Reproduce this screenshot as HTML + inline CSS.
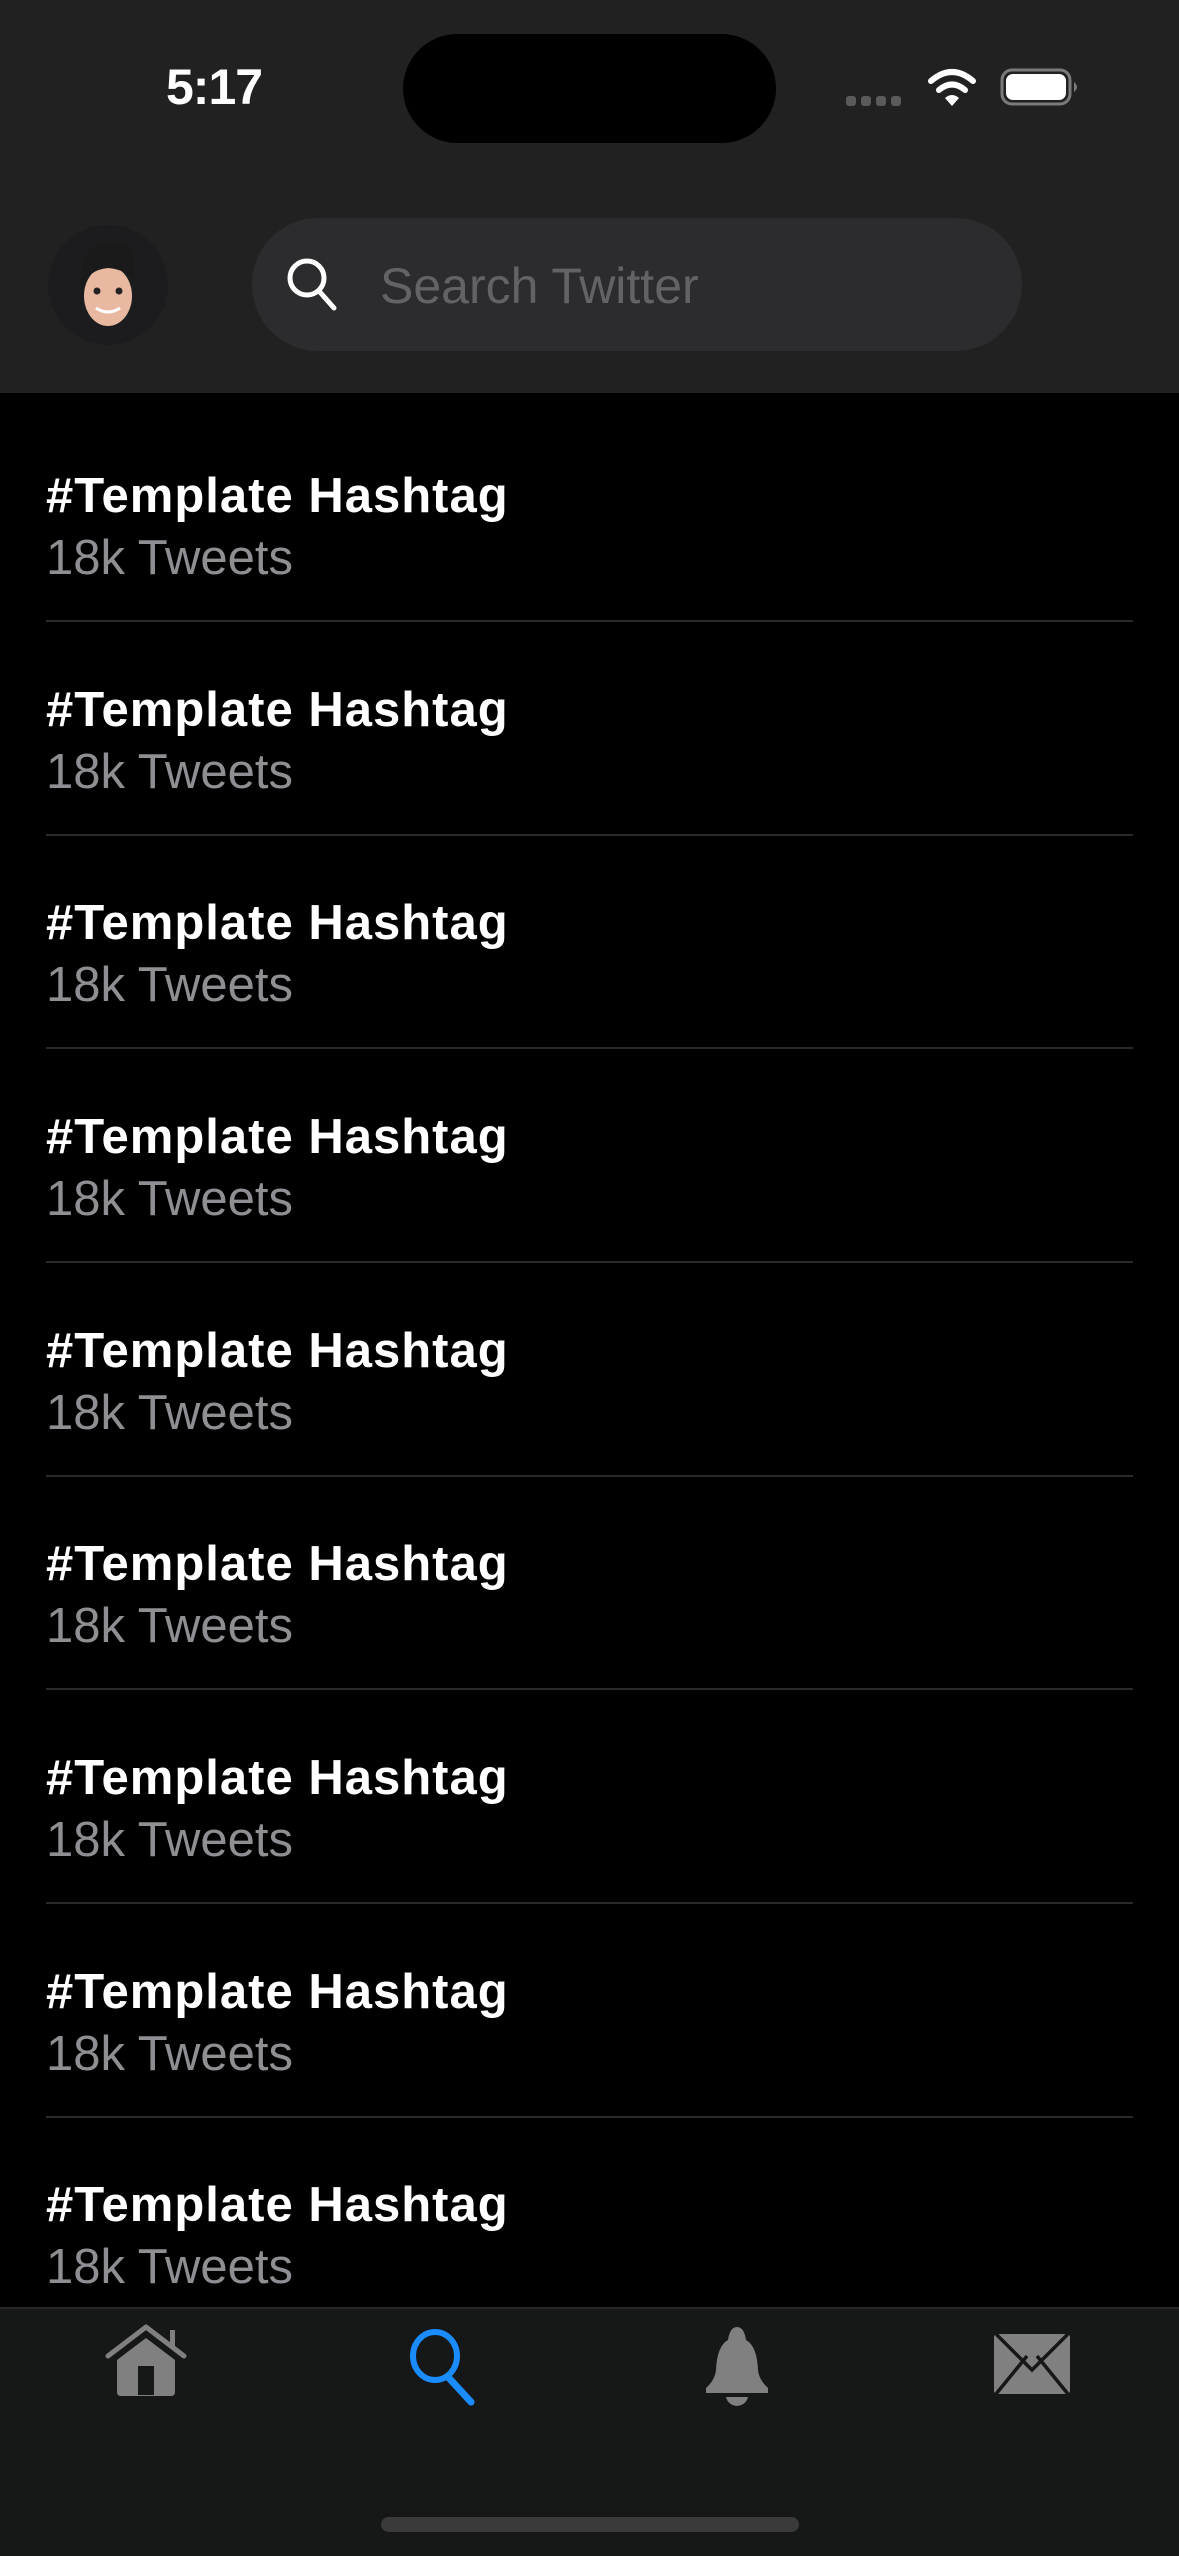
<!DOCTYPE html>
<html><head><meta charset="utf-8"><style>
*{margin:0;padding:0;box-sizing:border-box}
body{width:1179px;height:2556px;background:#000;position:relative;overflow:hidden;font-family:"Liberation Sans",sans-serif}
.hdr{position:absolute;left:0;top:0;width:1179px;height:393px;background:#212121}
.island{position:absolute;left:403px;top:34px;width:373px;height:109px;border-radius:55px;background:#000}
.time{position:absolute;left:166px;top:58px;font-size:50px;font-weight:bold;color:#fff;letter-spacing:-1px}
.avatar{position:absolute;left:48px;top:225px;width:120px;height:120px;border-radius:60px;background:#1c1c1e}
.search{position:absolute;left:252px;top:218px;width:770px;height:133px;border-radius:66px;background:#2c2c2e}
.ph{position:absolute;left:380px;top:257px;font-size:50px;color:#636366}
.t{position:absolute;left:0;font-size:49px;font-weight:bold;color:#fff;letter-spacing:1px;white-space:nowrap}
.s{position:absolute;left:0;font-size:49px;color:#8e8e93;white-space:nowrap}
.sep{position:absolute;left:46px;width:1087px;height:2px;background:#2a2a2c}
.tab{position:absolute;left:0;top:2307px;width:1179px;height:249px;background:#161717;border-top:2px solid #262626}
.hi{position:absolute;left:381px;top:2517px;width:418px;height:15px;border-radius:8px;background:#3a3a3a}
</style></head><body>
<div class="hdr"></div>
<div class="island"></div>
<div class="time">5:17</div>
<svg style="position:absolute;left:840px;top:60px" width="250" height="60" viewBox="840 60 250 60">
<rect x="846" y="96" width="10" height="10" rx="3" fill="#5a5a5a"/>
<rect x="861" y="96" width="10" height="10" rx="3" fill="#5a5a5a"/>
<rect x="876" y="96" width="10" height="10" rx="3" fill="#5a5a5a"/>
<rect x="891" y="96" width="10" height="10" rx="3" fill="#5a5a5a"/>
<path d="M931 81 Q952 63 973 81" stroke="#fff" stroke-width="6" fill="none" stroke-linecap="round"/>
<path d="M939 90 Q952 79 965 90" stroke="#fff" stroke-width="6" fill="none" stroke-linecap="round"/>
<path d="M945 98 Q952 92 959 98 L952 106 Z" fill="#fff"/>
<rect x="1002" y="70" width="68" height="34" rx="10" fill="none" stroke="#7a7a7a" stroke-width="3"/>
<rect x="1006" y="74" width="60" height="26" rx="7" fill="#fff"/>
<path d="M1074 82 Q1080 87 1074 92 Z" fill="#7a7a7a"/>
</svg>
<div class="avatar"></div>
<svg style="position:absolute;left:78px;top:238px" width="60" height="92" viewBox="0 0 60 92">
<ellipse cx="30" cy="58" rx="24" ry="30" fill="#e8b9a0"/>
<path d="M4 46 Q0 8 28 4 Q52 2 56 22 L55 46 Q52 32 30 30 Q10 32 6 48 Z" fill="#1a1a1a"/>
<circle cx="19" cy="53" r="3.5" fill="#222"/><circle cx="41" cy="53" r="3.5" fill="#222"/>
<path d="M18 70 Q30 78 42 70" stroke="#fff" stroke-width="3" fill="none"/>
</svg>
<div class="search"></div>
<svg style="position:absolute;left:280px;top:250px" width="70" height="70" viewBox="280 250 70 70">
<circle cx="307" cy="278" r="17" stroke="#fff" stroke-width="5" fill="none"/>
<path d="M319 291 L334 308" stroke="#fff" stroke-width="5" stroke-linecap="round"/>
</svg>
<div class="ph">Search Twitter</div>

<div class="t" style="left:46px;top:468px">#Template Hashtag</div><div class="s" style="left:46px;top:530px">18k Tweets</div><div class="sep" style="top:620px"></div>
<div class="t" style="left:46px;top:682px">#Template Hashtag</div><div class="s" style="left:46px;top:744px">18k Tweets</div><div class="sep" style="top:834px"></div>
<div class="t" style="left:46px;top:895px">#Template Hashtag</div><div class="s" style="left:46px;top:957px">18k Tweets</div><div class="sep" style="top:1047px"></div>
<div class="t" style="left:46px;top:1109px">#Template Hashtag</div><div class="s" style="left:46px;top:1171px">18k Tweets</div><div class="sep" style="top:1261px"></div>
<div class="t" style="left:46px;top:1323px">#Template Hashtag</div><div class="s" style="left:46px;top:1385px">18k Tweets</div><div class="sep" style="top:1475px"></div>
<div class="t" style="left:46px;top:1536px">#Template Hashtag</div><div class="s" style="left:46px;top:1598px">18k Tweets</div><div class="sep" style="top:1688px"></div>
<div class="t" style="left:46px;top:1750px">#Template Hashtag</div><div class="s" style="left:46px;top:1812px">18k Tweets</div><div class="sep" style="top:1902px"></div>
<div class="t" style="left:46px;top:1964px">#Template Hashtag</div><div class="s" style="left:46px;top:2026px">18k Tweets</div><div class="sep" style="top:2116px"></div>
<div class="t" style="left:46px;top:2177px">#Template Hashtag</div><div class="s" style="left:46px;top:2239px">18k Tweets</div>

<div class="tab"></div>
<svg style="position:absolute;left:0;top:2307px" width="1179" height="120" viewBox="0 2307 1179 120">
<path d="M108 2356 L146 2327 L184 2356" stroke="#808080" stroke-width="5" fill="none" stroke-linejoin="round" stroke-linecap="round"/>
<rect x="170" y="2330" width="5" height="16" fill="#808080"/>
<path d="M117 2360 L146 2338 L175 2360 L175 2392 Q175 2396 171 2396 L121 2396 Q117 2396 117 2392 Z" fill="#808080"/>
<rect x="138" y="2366" width="16" height="29" fill="#161717"/>
<ellipse cx="435" cy="2356" rx="22" ry="24" stroke="#1a8cff" stroke-width="6" fill="none"/>
<path d="M448 2377 L471 2402" stroke="#1a8cff" stroke-width="7" stroke-linecap="round"/>
<path d="M737 2327 Q744 2327 746 2340 Q757 2346 758 2370 Q759 2380 768 2388 L768 2393 L706 2393 L706 2388 Q715 2380 716 2370 Q717 2346 728 2340 Q730 2327 737 2327 Z" fill="#808080"/>
<path d="M726 2397 L748 2397 Q746 2405 737 2406 Q728 2405 726 2397 Z" fill="#808080"/>
<rect x="994" y="2334" width="76" height="60" rx="3" fill="#808080"/>
<path d="M996 2334 L1032 2370 L1068 2334 M996 2394 L1027 2356 M1068 2394 L1037 2356" stroke="#161717" stroke-width="3.5" fill="none"/>
</svg>
<div class="hi"></div>
</body></html>
